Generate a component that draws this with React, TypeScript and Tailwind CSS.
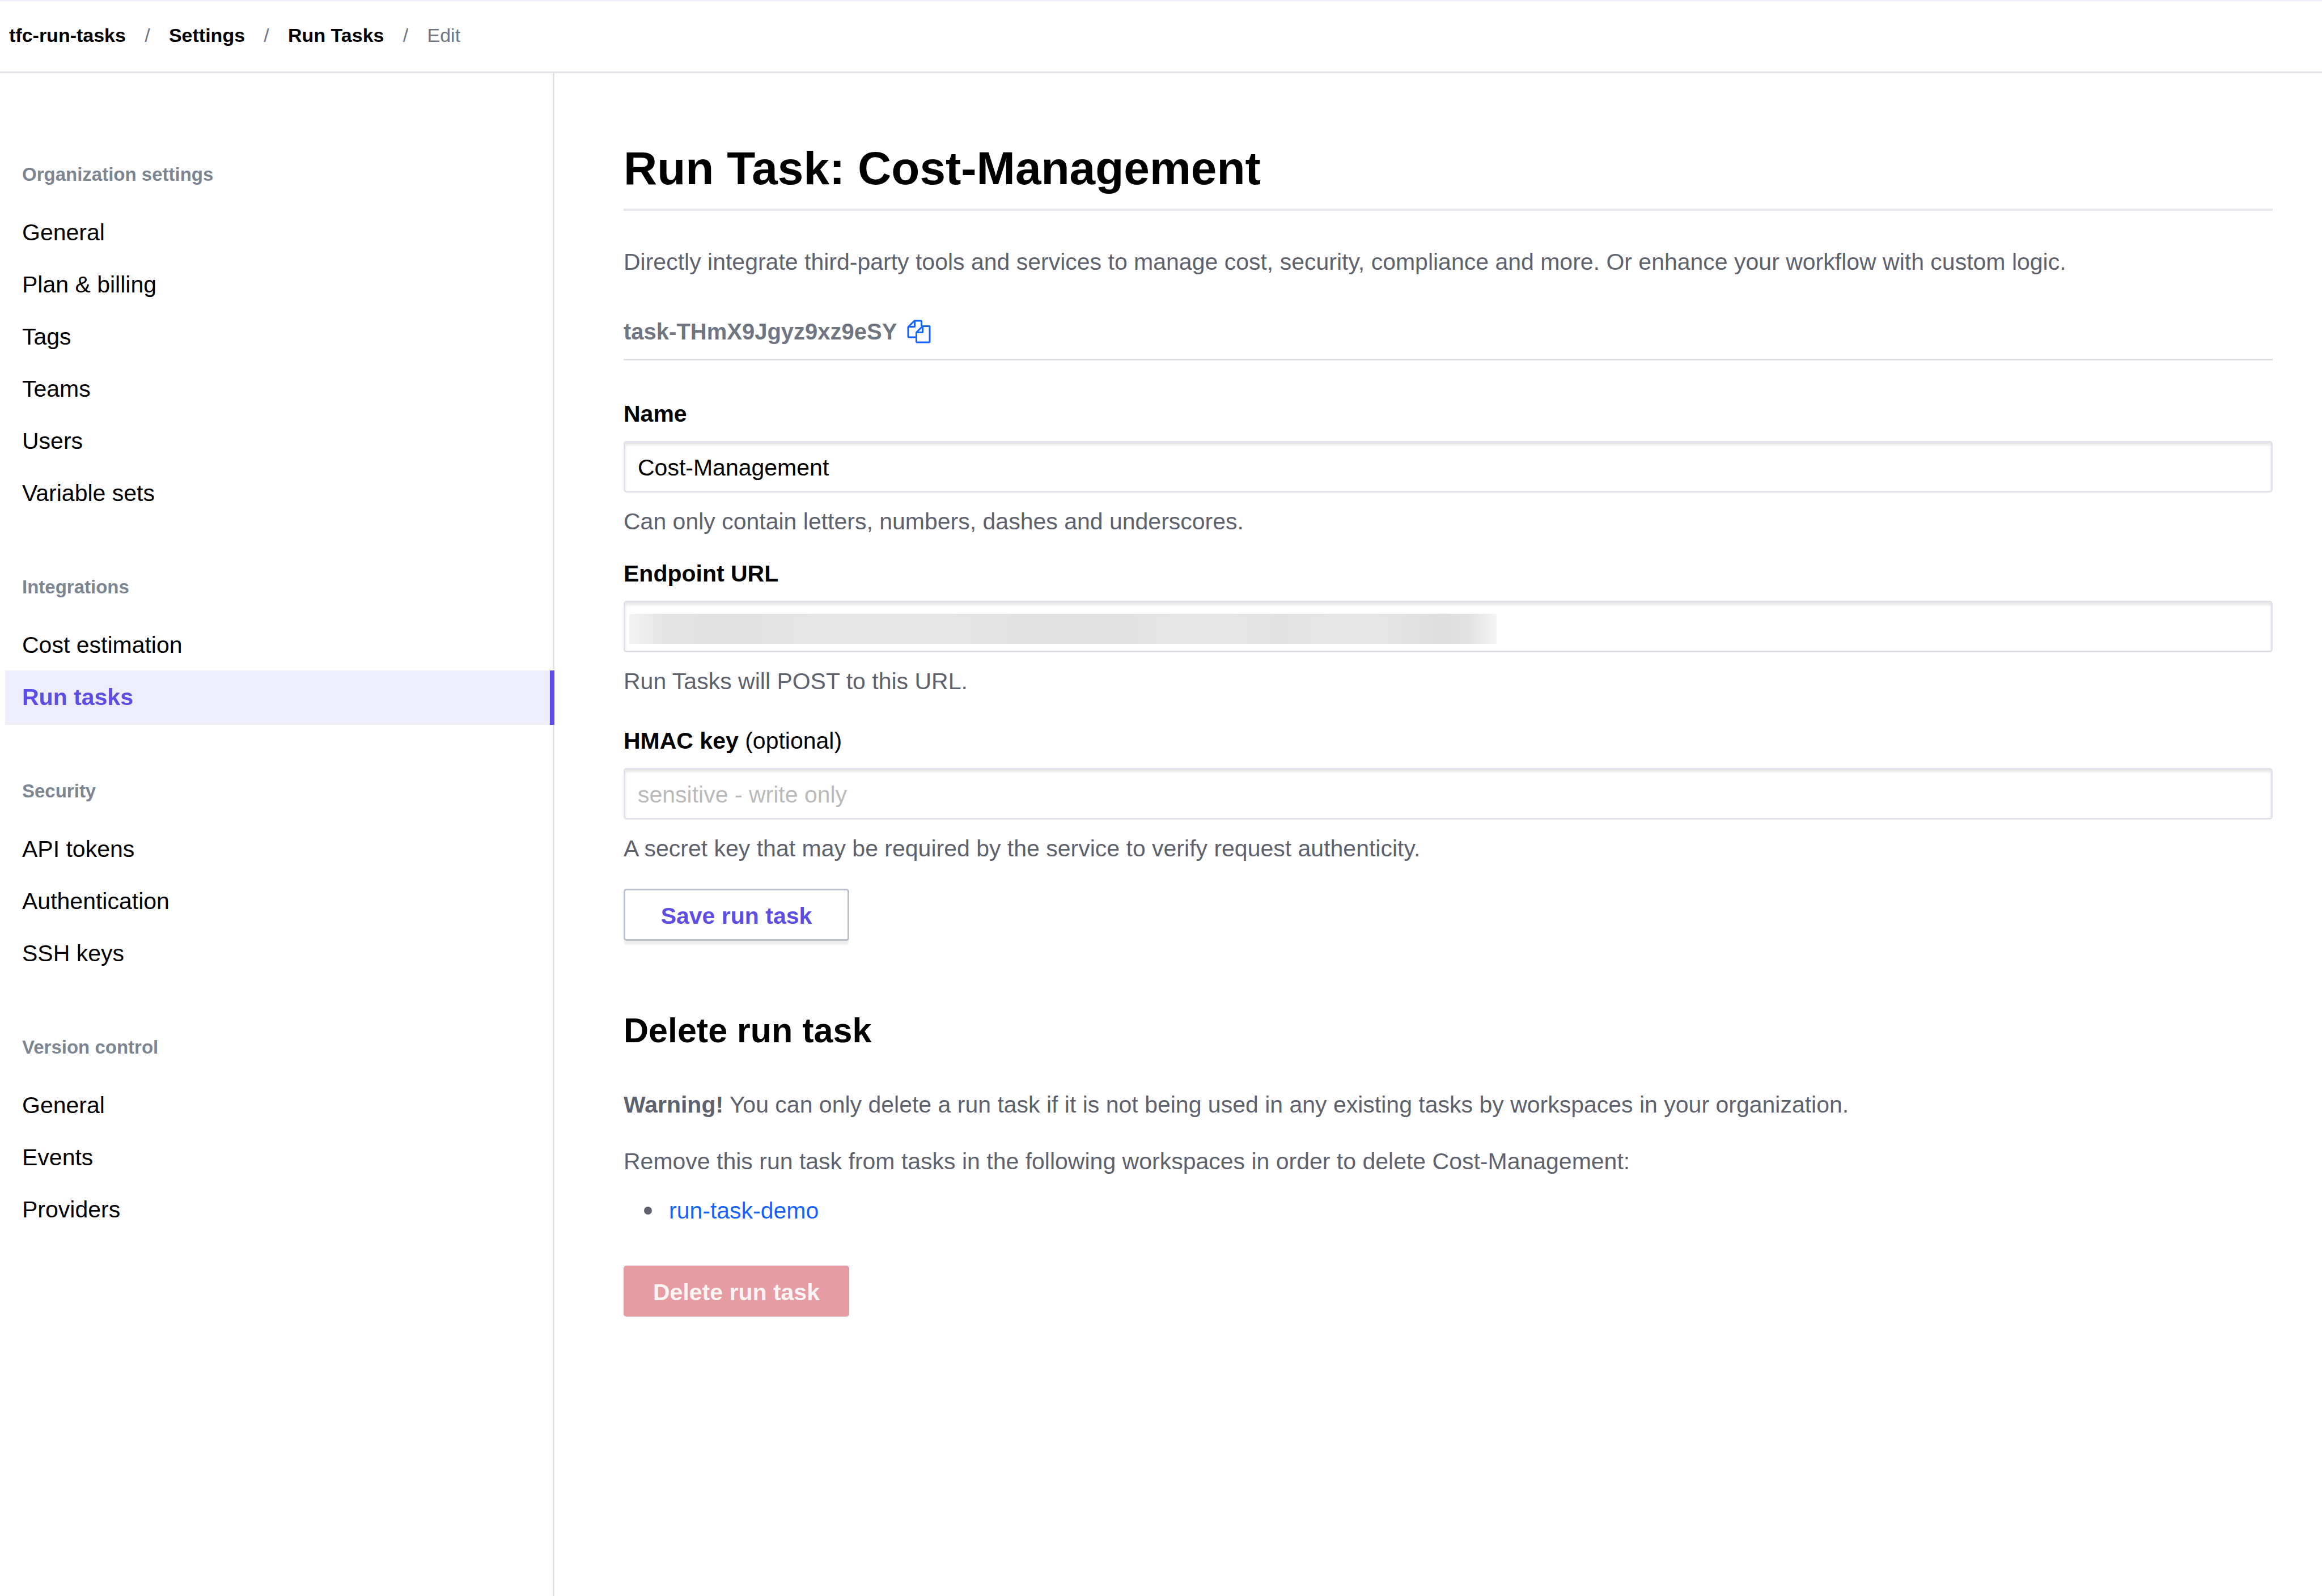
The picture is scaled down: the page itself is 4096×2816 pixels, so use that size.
import { useState } from "react";

type NavItem = { label: string; active?: boolean };
type NavGroup = { title: string; items: NavItem[] };

const groups: NavGroup[] = [
  {
    title: "Organization settings",
    items: [
      { label: "General" },
      { label: "Plan & billing" },
      { label: "Tags" },
      { label: "Teams" },
      { label: "Users" },
      { label: "Variable sets" },
    ],
  },
  {
    title: "Integrations",
    items: [{ label: "Cost estimation" }, { label: "Run tasks", active: true }],
  },
  {
    title: "Security",
    items: [{ label: "API tokens" }, { label: "Authentication" }, { label: "SSH keys" }],
  },
  {
    title: "Version control",
    items: [{ label: "General" }, { label: "Events" }, { label: "Providers" }],
  },
];

const crumbs = ["tfc-run-tasks", "Settings", "Run Tasks"];

function Breadcrumbs() {
  return (
    <header className="h-[129px] border-t-2 border-b-[3px] border-t-[#eeedfc] border-b-[#e2e6ea] pb-[3px] pl-4">
      <nav aria-label="Breadcrumb" className="h-full">
        <ol className="flex h-full items-center text-[34px] font-bold">
          {crumbs.map((crumb) => (
            <li key={crumb} className="flex items-center">
              <a href="#" className="text-black">
                {crumb}
              </a>
              <span aria-hidden="true" className="w-[76px] text-center font-normal text-[#6f7682]">
                /
              </span>
            </li>
          ))}
          <li aria-current="page" className="font-normal text-[#6f7682]">
            Edit
          </li>
        </ol>
      </nav>
    </header>
  );
}

function Sidebar() {
  return (
    <aside className="w-[978px] shrink-0 border-r-[3px] border-[#e1e5ea] pt-[156px] pl-[9px]">
      <nav aria-label="Settings" className="flex flex-col gap-24">
        {groups.map((group) => (
          <section key={group.title}>
            <h2 className="pl-[30px] text-[33px] leading-[46px] font-bold text-[#7c8592]">
              {group.title}
            </h2>
            <ul className="mt-[34px]">
              {group.items.map((item) =>
                item.active ? (
                  <li key={item.label} className="-my-[2px] -mr-[3px]">
                    <a
                      href="#"
                      aria-current="page"
                      className="flex h-24 items-center border-r-8 border-[#5c4ee5] bg-[#eeedfc] pl-[30px] text-[41px] font-bold text-[#5c4ee5]"
                    >
                      {item.label}
                    </a>
                  </li>
                ) : (
                  <li key={item.label}>
                    <a href="#" className="flex h-[92px] items-center pl-[30px] text-[41px] text-black">
                      {item.label}
                    </a>
                  </li>
                ),
              )}
            </ul>
          </section>
        ))}
      </nav>
    </aside>
  );
}

function CopyIcon() {
  return (
    <svg
      viewBox="0 0 42 42"
      className="size-[42px]"
      fill="none"
      stroke="currentColor"
      strokeWidth="3"
      strokeLinejoin="round"
      aria-hidden="true"
    >
      <path d="M16 31H3.500Q2 31 2 29.500V13L13 2H24Q25.500 2 25.500 3.500V11.500" />
      <path d="M13.500 2.500V12.500H3" />
      <path d="M27.500 11.500H38.500Q40 11.500 40 13V38.500Q40 40 38.500 40H18Q16.500 40 16.500 38.500V22.500Z" />
      <path d="M27.500 12V22.500H17" />
    </svg>
  );
}

const inputClass =
  "block h-[91px] w-full rounded-[5px] border-[3px] border-[#dfe3e9] bg-white px-[22px] pt-[3px] text-[41px] text-black shadow-[inset_0_4px_5px_rgba(0,0,0,0.10)] outline-none placeholder:text-[#bababa]";
const labelClass = "block text-[41px] leading-[60px] font-bold text-black";
const helpClass = "mt-[21px] text-[41px] leading-[60px]";

export default function App() {
  const [name, setName] = useState("Cost-Management");
  const [url, setUrl] = useState("");
  const [key, setKey] = useState("");

  return (
    <div className="flex min-h-screen flex-col bg-white font-['Liberation_Sans',Arial,sans-serif]">
      <Breadcrumbs />
      <div className="flex flex-1">
        <Sidebar />
        <main className="min-w-0 flex-1 pt-[120px] pr-[87px] pb-24 pl-[122px] text-[41px] leading-[60px] text-[#5d626e]">
          <h1 className="border-b-4 border-[#e4e6eb] pb-[23px] text-[82px] leading-[96px] font-bold text-black">
            Run Task: Cost-Management
          </h1>
          <p className="mt-[60px]">
            Directly integrate third-party tools and services to manage cost, security, compliance and more. Or
            enhance your workflow with custom logic.
          </p>

          <div className="mt-[63px] flex items-center gap-[18px] border-b-[3px] border-[#dfe3e8] pb-[18px]">
            <span className="text-[40px] font-bold text-[#6f7682]">task-THmX9Jgyz9xz9eSY</span>
            <button type="button" aria-label="Copy task ID" className="text-[#1563ff]">
              <CopyIcon />
            </button>
          </div>

          <form className="mt-16" onSubmit={(e) => e.preventDefault()}>
            <div>
              <label htmlFor="task-name" className={labelClass}>
                Name
              </label>
              <div className="mt-[18px]">
                <input
                  id="task-name"
                  type="text"
                  value={name}
                  onChange={(e) => setName(e.target.value)}
                  className={inputClass}
                />
              </div>
              <p className={helpClass}>Can only contain letters, numbers, dashes and underscores.</p>
            </div>

            <div className="mt-8">
              <label htmlFor="endpoint-url" className={labelClass}>
                Endpoint URL
              </label>
              <div className="relative mt-[18px]">
                <input
                  id="endpoint-url"
                  type="url"
                  value={url}
                  onChange={(e) => setUrl(e.target.value)}
                  className={inputClass}
                />
                {/* Redacted value */}
                <div
                  aria-hidden="true"
                  className="pointer-events-none absolute top-[23px] left-[10px] h-[53px] w-[1530px] bg-[linear-gradient(90deg,#f3f3f3_0%,#e4e4e4_4%,#e1e1e1_12%,#e6e6e6_22%,#e8e8e8_32%,#e2e2e2_45%,#e1e1e1_56%,#e8e8e8_66%,#e2e2e2_75%,#e8e8e8_84%,#dedede_94%,#e3e3e3_97%,#f5f5f5_100%)]"
                />
              </div>
              <p className={helpClass}>Run Tasks will POST to this URL.</p>
            </div>

            <div className="mt-[45px]">
              <label htmlFor="hmac-key" className={labelClass}>
                HMAC key <span className="font-normal">(optional)</span>
              </label>
              <div className="mt-[18px]">
                <input
                  id="hmac-key"
                  type="text"
                  placeholder="sensitive - write only"
                  value={key}
                  onChange={(e) => setKey(e.target.value)}
                  className={inputClass}
                />
              </div>
              <p className={helpClass}>
                A secret key that may be required by the service to verify request authenticity.
              </p>
            </div>

            <button
              type="submit"
              className="mt-[41px] flex h-[92px] w-[398px] items-center justify-center rounded-[5px] border-[3px] border-[#bac1cc] bg-white pt-1 font-bold text-[#5c4ee5] shadow-[0_8px_3px_-1px_rgba(0,0,0,0.07)]"
            >
              Save run task
            </button>
          </form>

          <section className="mt-[122px]">
            <h2 className="text-[61px] leading-[72px] font-bold text-black">Delete run task</h2>
            <p className="mt-[65px]">
              <strong>Warning!</strong> You can only delete a run task if it is not being used in any existing tasks
              by workspaces in your organization.
            </p>
            <p className="mt-10">
              Remove this run task from tasks in the following workspaces in order to delete Cost-Management:
            </p>
            <ul className="mt-[27px] pl-9">
              <li className="flex items-center gap-[30px] before:size-[14px] before:rounded-full before:bg-[#5d626e]">
                <a href="#" className="text-[#1563ff]">
                  run-task-demo
                </a>
              </li>
            </ul>
            <button
              type="button"
              disabled
              className="mt-[67px] flex h-[90px] w-[398px] items-center justify-center rounded-[5px] bg-[#e69ca3] pt-1 font-bold text-[#fcf3f4]"
            >
              Delete run task
            </button>
          </section>
        </main>
      </div>
    </div>
  );
}
